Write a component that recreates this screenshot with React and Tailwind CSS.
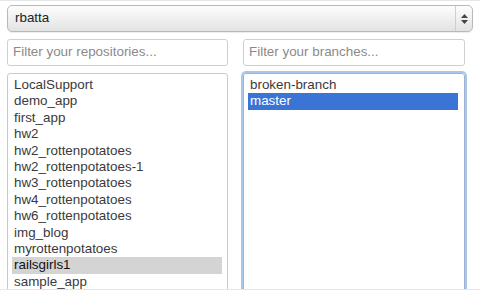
import React from 'react';

const repos = [
  'LocalSupport',
  'demo_app',
  'first_app',
  'hw2',
  'hw2_rottenpotatoes',
  'hw2_rottenpotatoes-1',
  'hw3_rottenpotatoes',
  'hw4_rottenpotatoes',
  'hw6_rottenpotatoes',
  'img_blog',
  'myrottenpotatoes',
  'railsgirls1',
  'sample_app',
];

const branches = ['broken-branch', 'master'];

const ListRow = ({ label, state }) => {
  const styles = ['h-[16.4px] leading-[16.4px] pl-[2px] whitespace-nowrap'];
  if (state === 'active') styles.push('bg-[#3a75d6] text-white');
  else if (state === 'inactive') styles.push('bg-[#d4d4d4] text-[#111]');
  else styles.push('text-[#3a3a3a]');
  return <div className={styles.join(' ')}>{label}</div>;
};

export default function App() {
  return (
    <div
      className="w-[480px] h-[290px] overflow-hidden bg-white border-t border-b border-[#e6e6e6] text-[13.4px]"
      style={{ fontFamily: '"Liberation Sans", Arial, sans-serif' }}
    >
      <div className="pl-[7px] pr-[7px] pt-[4px]">
        {/* Owner select */}
        <div className="h-[27px] w-[466px] flex items-center rounded-[5px] border border-[#b9b9b9] bg-gradient-to-b from-[#fdfdfd] to-[#e3e3e3] shadow-[0_1px_1px_rgba(0,0,0,0.08)]">
          <span className="flex-1 pl-[7px] text-[#222]">rbatta</span>
          <div className="w-[17px] h-full border-l border-[#cfcfcf] flex flex-col items-center justify-center gap-[2px]">
            <svg width="7" height="4" viewBox="0 0 7 4"><path d="M3.5 0L7 4H0z" fill="#444" /></svg>
            <svg width="7" height="4" viewBox="0 0 7 4"><path d="M0 0h7L3.5 4z" fill="#444" /></svg>
          </div>
        </div>

        {/* Filters */}
        <div className="flex mt-[7px] gap-[15px]">
          <div className="w-[221px] h-[27px] rounded-[3px] border border-[#cfcfcf] flex items-center pl-[5px] text-[#8a8a8a]">
            Filter your repositories...
          </div>
          <div className="w-[222px] h-[27px] rounded-[3px] border border-[#cfcfcf] flex items-center pl-[5px] text-[#8a8a8a]">
            Filter your branches...
          </div>
        </div>

        {/* Lists */}
        <div className="flex mt-[7px] gap-[15px]">
          <div className="w-[221px] h-[240px] rounded-t-[3px] border border-[#c9c9c9] pt-[3px] pl-[4px] pr-[5px]">
            {repos.map((r) => (
              <ListRow key={r} label={r} state={r === 'railsgirls1' ? 'inactive' : null} />
            ))}
          </div>
          <div className="w-[222px] h-[240px] rounded-t-[3px] border border-[#9fb4cc] shadow-[0_0_0_2px_#a7c8ec] pt-[3px] pl-[4px] pr-[6px]">
            {branches.map((b) => (
              <ListRow key={b} label={b} state={b === 'master' ? 'active' : null} />
            ))}
          </div>
        </div>
      </div>
    </div>
  );
}
